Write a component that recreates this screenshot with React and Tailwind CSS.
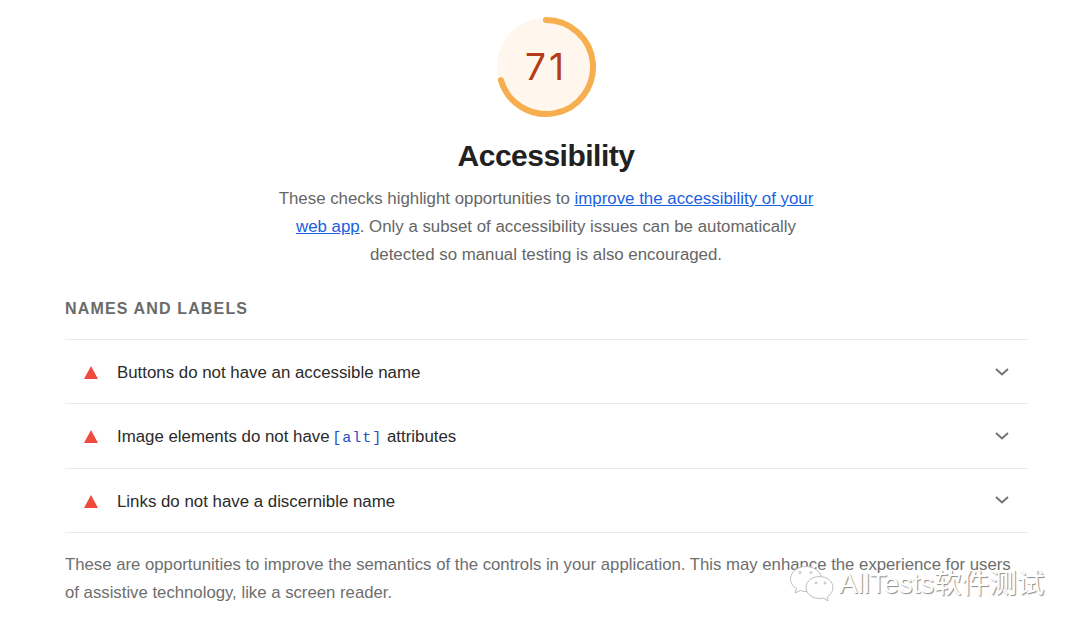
const audits = [
  { id: "buttons", content: <>Buttons do not have an accessible name</> },
  {
    id: "images",
    content: (
      <>
        Image elements do not have{" "}
        <code className="-ml-[2px] text-[15px] tracking-[1px] text-[#2450c8] font-['Liberation_Mono',monospace]">[alt]</code> attributes
      </>
    ),
  },
  { id: "links", content: <>Links do not have a discernible name</> },
];

const ScoreGauge = () => (
  <div className="relative w-[104px] h-[104px]">
    <svg viewBox="0 0 104 104" className="w-[104px] h-[104px]">
      <circle cx="52" cy="52" r="49" fill="#fff6ed" />
      <path
        d="M52 5 A47 47 0 1 1 6.9 65.2"
        fill="none"
        stroke="#f6ae4f"
        strokeWidth="6"
        strokeLinecap="round"
      />
    </svg>
    <div className="absolute inset-0 flex items-center justify-center text-[37px] tracking-[3px] text-[#b53c1b] font-['Inter',sans-serif]">71</div>
  </div>
);

const AuditRow = ({ children }) => (
  <div className="flex items-center h-[64.33px] border-b border-[#e9e9e9] pl-[19px] pr-[18px]">
    <svg viewBox="0 0 14 13" className="w-[14px] h-[13px] mt-[2px] mr-[19px] shrink-0">
      <polygon points="7,0 14,13 0,13" fill="#ef4a3c" />
    </svg>
    <div className="flex-1 mt-[2px] text-[16.85px] text-[#2b2b2b]">{children}</div>
    <svg viewBox="0 0 14 8" className="w-[14px] h-[8px]" fill="none" stroke="#737373" strokeWidth="2">
      <polyline points="1,1 7,6.5 13,1" />
    </svg>
  </div>
);

export default function App() {
  return (
    <div className="relative w-[1080px] h-[632px] overflow-hidden bg-white font-['Liberation_Sans',Arial,sans-serif]">
      <div className="ml-[65px] w-[962px]">
        <div className="flex flex-col items-center pt-[15px]">
          <ScoreGauge />
          <h1 className="mt-[15px] text-[30px] leading-[44px] font-semibold text-[#212121] tracking-[-0.5px]">Accessibility</h1>
          <p className="mt-[7px] w-[545px] text-center text-[16.85px] leading-[28px] text-[#666666]">
            These checks highlight opportunities to{" "}
            <a className="text-[#1a5fe0] underline">improve the accessibility of your web app</a>
            . Only a subset of accessibility issues can be automatically detected so manual testing is also encouraged.
          </p>
        </div>
        <h2 className="mt-[28px] text-[16px] leading-[24px] font-semibold tracking-[1.15px] text-[#6a6a6a] uppercase pb-[18px] border-b border-[#e9e9e9]">
          Names and labels
        </h2>
        {audits.map((a) => (
          <AuditRow key={a.id}>{a.content}</AuditRow>
        ))}
        <p className="mt-[18px] text-[16.74px] leading-[28px] text-[#6e6e6e]">
          These are opportunities to improve the semantics of the controls in your application. This may enhance the experience for users of assistive technology, like a screen reader.
        </p>
      </div>
      {/* watermark */}
      <div className="absolute left-[790px] top-[566px] flex items-center">
        <svg viewBox="0 0 44 36" className="w-[44px] h-[36px]" fill="#ffffff" stroke="#bdbdbd" strokeWidth="1">
          <path d="M16 .5C7.5 .5 .5 6 .5 13C.5 17 3 20.5 6.5 22.5L5 27L10.5 24.5C12.5 25.2 14 25.5 16 25.5C24.5 25.5 31.5 20 31.5 13C31.5 6 24.5 .5 16 .5Z" />
          <path d="M29.5 10.5C22 10.5 16 15.5 16 21.5C16 27.5 22 32.5 29.5 32.5C31 32.5 32.5 32.3 33.5 32L38 35L37.5 30.5C40.8 28.5 43 25.2 43 21.5C43 15.5 37 10.5 29.5 10.5Z" />
          <circle cx="10" cy="6.5" r="1" />
          <circle cx="21" cy="6.5" r="1" />
          <circle cx="26" cy="17" r="1" />
          <circle cx="35" cy="17" r="1" />
        </svg>
        <span className="ml-[5px] text-[27.6px] leading-[36px] text-white [text-shadow:1px_1px_1px_#8a8a8a] font-['Liberation_Sans','Noto_Sans_CJK_SC',sans-serif]">
          AllTests软件测试
        </span>
      </div>
    </div>
  );
}
